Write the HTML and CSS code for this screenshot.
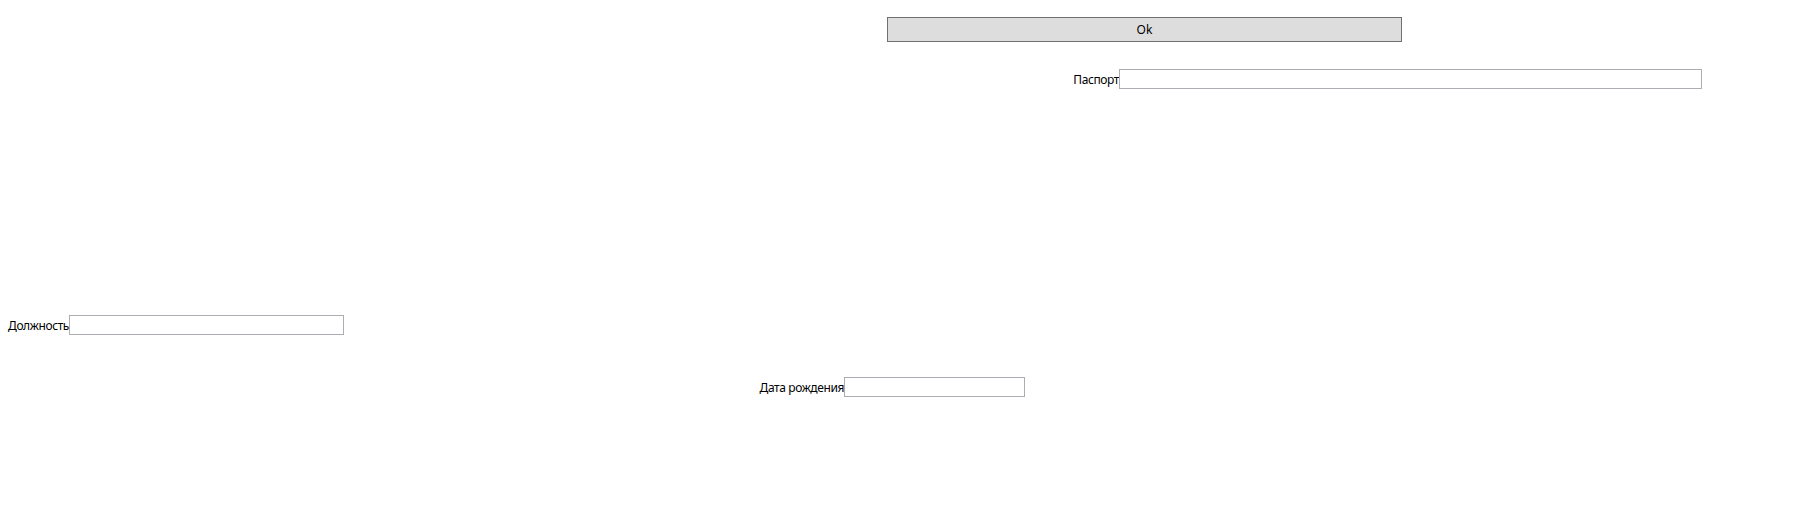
FILE: index.html
```html
<!DOCTYPE html>
<html lang="ru">
<head>
<meta charset="utf-8">
<title>Форма</title>
<link rel="stylesheet" href="styles.css">
</head>
<body>
<div class="canvas">
  <div class="row row-ok">
    <button class="btn-ok" type="button">Ok</button>
  </div>
  <div class="row row-passport">
    <label class="lbl lbl-passport">Паспорт</label>
    <input class="field field-passport" type="text">
  </div>
  <div class="row row-position">
    <label class="lbl lbl-position">Должность</label>
    <input class="field field-position" type="text">
  </div>
  <div class="row row-birth">
    <label class="lbl lbl-birth">Дата рождения</label>
    <input class="field field-birth" type="text">
  </div>
</div>
</body>
</html>
```

FILE: styles.css
```css
html, body {
  margin: 0;
  padding: 0;
  background: #ffffff;
}
body {
  font-family: "Noto Sans", "Open Sans", "Liberation Sans", sans-serif;
  font-size: 12px;
  color: #000000;
  width: 1803px;
  height: 524px;
  overflow: hidden;
}
.canvas {
  display: flex;
  flex-direction: column;
}
.row {
  display: flex;
  align-items: center;
}
.row-ok {
  margin-top: 17px;
  padding-left: 887px;
}
.btn-ok {
  width: 515px;
  height: 25px;
  margin: 0;
  padding: 0;
  background: #dddddd;
  border: 1px solid #707070;
  font-family: inherit;
  font-size: 12px;
  color: #000000;
  box-sizing: border-box;
}
.lbl {
  display: block;
  text-align: right;
  white-space: nowrap;
  letter-spacing: -0.4px;
  line-height: 16px;
  padding-top: 2px;
  box-sizing: border-box;
}
.field {
  margin: 0;
  padding: 0 2px;
  height: 20px;
  border: 1px solid #abadb3;
  background: #ffffff;
  box-sizing: border-box;
  font-family: inherit;
  font-size: 12px;
  outline: none;
}
.row-passport { margin-top: 27px; }
.lbl-passport { width: 1119px; }
.field-passport { width: 583px; }
.row-position { margin-top: 226px; }
.lbl-position { width: 69px; }
.field-position { width: 275px; }
.row-birth { margin-top: 42px; }
.lbl-birth { width: 844px; }
.field-birth { width: 181px; }
```
